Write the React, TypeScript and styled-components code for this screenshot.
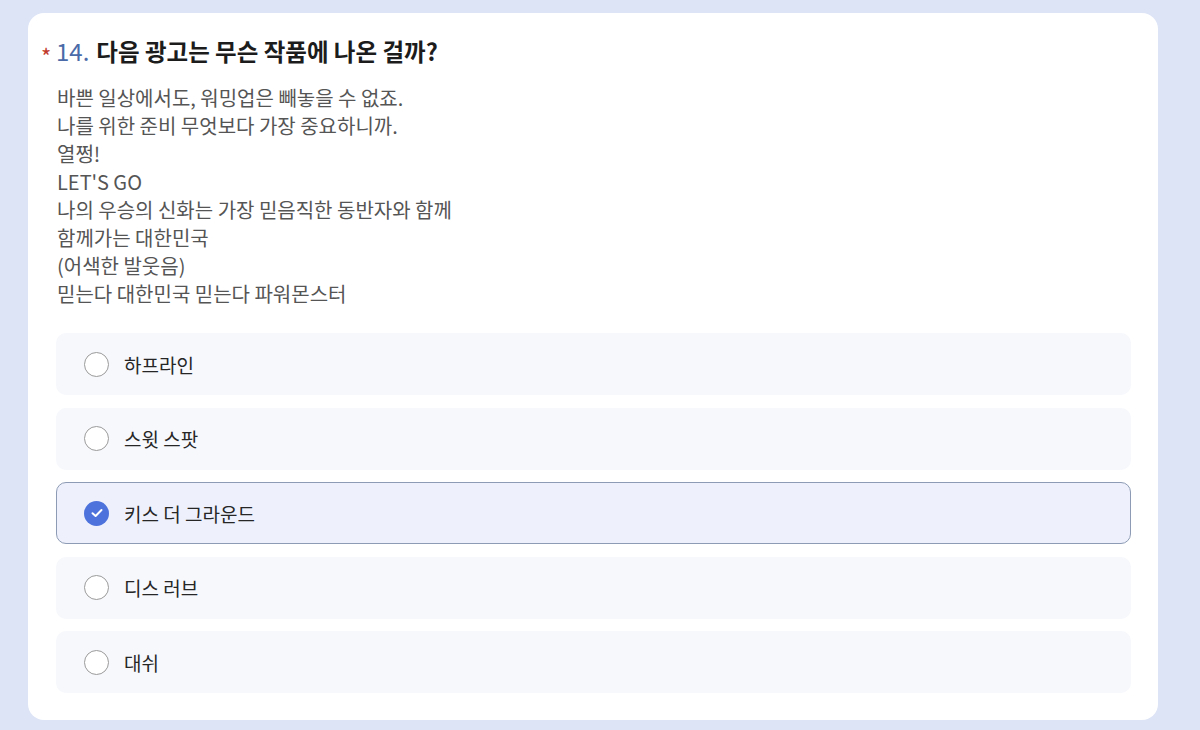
import styled, { createGlobalStyle } from "styled-components";

const GlobalStyle = createGlobalStyle`
  body {
    margin: 0;
    background: #dde4f6;
    font-family: "Noto Sans CJK KR", "Noto Sans", sans-serif;
  }
`;

const lines = [
  "바쁜 일상에서도, 워밍업은 빼놓을 수 없죠.",
  "나를 위한 준비 무엇보다 가장 중요하니까.",
  "열쩡!",
  "LET'S GO",
  "나의 우승의 신화는 가장 믿음직한 동반자와 함께",
  "함께가는 대한민국",
  "(어색한 발웃음)",
  "믿는다 대한민국 믿는다 파워몬스터",
];

const options = ["하프라인", "스윗 스팟", "키스 더 그라운드", "디스 러브", "대쉬"];
const selected = 2;

export default function App() {
  return (
    <>
      <GlobalStyle />
      <Page>
        <Card>
          <Title>
            <Required>*</Required>
            <Number>14.</Number>
            다음 광고는 무슨 작품에 나온 걸까?
          </Title>
          <Description>
            {lines.map((line) => (
              <div key={line}>{line}</div>
            ))}
          </Description>
          <OptionList>
            {options.map((opt, i) => (
              <Option key={opt} $checked={i === selected}>
                <Radio $checked={i === selected}>
                  {i === selected && (
                    <svg width="12" height="10" viewBox="0 0 12 10">
                      <path
                        d="M1.5 5.2 L4.6 8 L10.5 2"
                        fill="none"
                        stroke="#fff"
                        strokeWidth="2"
                        strokeLinecap="round"
                        strokeLinejoin="round"
                      />
                    </svg>
                  )}
                </Radio>
                <OptionLabel>{opt}</OptionLabel>
              </Option>
            ))}
          </OptionList>
        </Card>
      </Page>
    </>
  );
}

const Page = styled.div`
  padding: 13px 42px 10px 28px;
`;

const Card = styled.div`
  background: #fff;
  border-radius: 16px;
  padding: 21px 27px 27px 28px;
  height: 707px;
  box-sizing: border-box;
`;

const Title = styled.h1`
  margin: 0;
  font-size: 23.5px;
  font-weight: 700;
  color: #1c1c1c;
  line-height: 34px;
  display: flex;
  align-items: baseline;
`;

const Required = styled.span`
  color: #c0392b;
  font-size: 22px;
  font-weight: 400;
  margin-left: -15px;
  width: 15px;
  position: relative;
  top: 4px;
`;

const Number = styled.span`
  color: #4a6aa8;
  font-size: 24px;
  font-weight: 400;
  margin-right: 7px;
`;

const Description = styled.div`
  margin-top: 16px;
  padding-left: 1px;
  font-size: 20px;
  line-height: 28px;
  color: #555;
`;

const OptionList = styled.div`
  margin-top: 25px;
  display: flex;
  flex-direction: column;
  gap: 12.5px;
`;

const Option = styled.div<{ $checked: boolean }>`
  height: 62px;
  box-sizing: border-box;
  border-radius: 10px;
  display: flex;
  align-items: center;
  gap: 15px;
  padding-left: 27px;
  background: ${(p) => (p.$checked ? "#eef1fc" : "#f6f8fc")};
  border: 1px solid ${(p) => (p.$checked ? "#8d9bb4" : "transparent")};
`;

const Radio = styled.span<{ $checked: boolean }>`
  width: 25px;
  height: 25px;
  box-sizing: border-box;
  border-radius: 50%;
  display: flex;
  align-items: center;
  justify-content: center;
  background: ${(p) => (p.$checked ? "#4d72db" : "#fff")};
  border: ${(p) => (p.$checked ? "none" : "1.5px solid #9a9a9a")};
`;

const OptionLabel = styled.span`
  font-size: 19px;
  font-weight: 400;
  color: #262626;
`;
